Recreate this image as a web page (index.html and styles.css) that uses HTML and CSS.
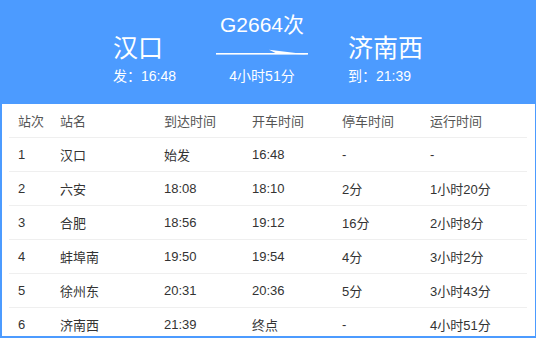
FILE: index.html
```html
<!DOCTYPE html>
<html lang="zh-CN">
<head>
<meta charset="utf-8">
<link rel="stylesheet" href="styles.css">
</head>
<body>
<div class="page">
  <header class="hero">
    <div class="station">
      <div class="name">汉口</div>
      <div class="sub">发：16:48</div>
    </div>
    <div class="train">
      <div class="code">G2664次</div>
      <svg class="arrow" width="92" height="8" viewBox="0 0 92 8">
        <rect x="0" y="4" width="92" height="1.6" fill="#fff"/>
        <polygon points="53,0.8 92,5.6 60,4.2" fill="#fff"/>
      </svg>
      <div class="sub">4小时51分</div>
    </div>
    <div class="station">
      <div class="name">济南西</div>
      <div class="sub">到：21:39</div>
    </div>
  </header>
  <main class="panel">
    <div class="table">
      <div class="row head">
        <div>站次</div><div>站名</div><div>到达时间</div><div>开车时间</div><div>停车时间</div><div>运行时间</div>
      </div>
      <div class="row">
        <div>1</div><div>汉口</div><div>始发</div><div>16:48</div><div>-</div><div>-</div>
      </div>
      <div class="row">
        <div>2</div><div>六安</div><div>18:08</div><div>18:10</div><div>2分</div><div>1小时20分</div>
      </div>
      <div class="row">
        <div>3</div><div>合肥</div><div>18:56</div><div>19:12</div><div>16分</div><div>2小时8分</div>
      </div>
      <div class="row">
        <div>4</div><div>蚌埠南</div><div>19:50</div><div>19:54</div><div>4分</div><div>3小时2分</div>
      </div>
      <div class="row">
        <div>5</div><div>徐州东</div><div>20:31</div><div>20:36</div><div>5分</div><div>3小时43分</div>
      </div>
      <div class="row">
        <div>6</div><div>济南西</div><div>21:39</div><div>终点</div><div>-</div><div>4小时51分</div>
      </div>
    </div>
  </main>
</div>
</body>
</html>
```
FILE: styles.css
```css
html, body {
  margin: 0;
  padding: 0;
  background: #4c9bff;
}
body {
  font-family: "Liberation Sans", "Noto Sans CJK SC", sans-serif;
  width: 536px;
  height: 338px;
  overflow: hidden;
}
.page {
  display: flex;
  flex-direction: column;
  height: 338px;
}
.hero {
  height: 104px;
  box-sizing: border-box;
  padding-bottom: 18px;
  display: flex;
  justify-content: center;
  align-items: flex-end;
  gap: 40px;
  color: #fff;
}
.station .name {
  font-size: 25px;
  line-height: 30px;
  margin-bottom: 3px;
}
.sub {
  font-size: 14px;
  line-height: 20px;
}
.train {
  display: flex;
  flex-direction: column;
  align-items: center;
  width: 92px;
}
.code {
  font-size: 21px;
  line-height: 26px;
  margin-bottom: 11px;
  white-space: nowrap;
}
.arrow {
  display: block;
  margin-bottom: 9px;
}
.panel {
  background: #fff;
  margin: 0 1px 2px 2px;
  height: 232px;
  overflow: hidden;
  padding: 0 8px 0 7px;
}
.table {
  display: flex;
  flex-direction: column;
}
.row {
  display: grid;
  grid-template-columns: 42px 104px 88px 90px 88px 1fr;
  height: 33px;
  border-bottom: 1px solid #efefef;
  align-items: center;
  font-size: 13px;
  color: #333;
}
.row > div {
  padding-left: 9px;
  white-space: nowrap;
}
.row.head {
  color: #555;
}
```
